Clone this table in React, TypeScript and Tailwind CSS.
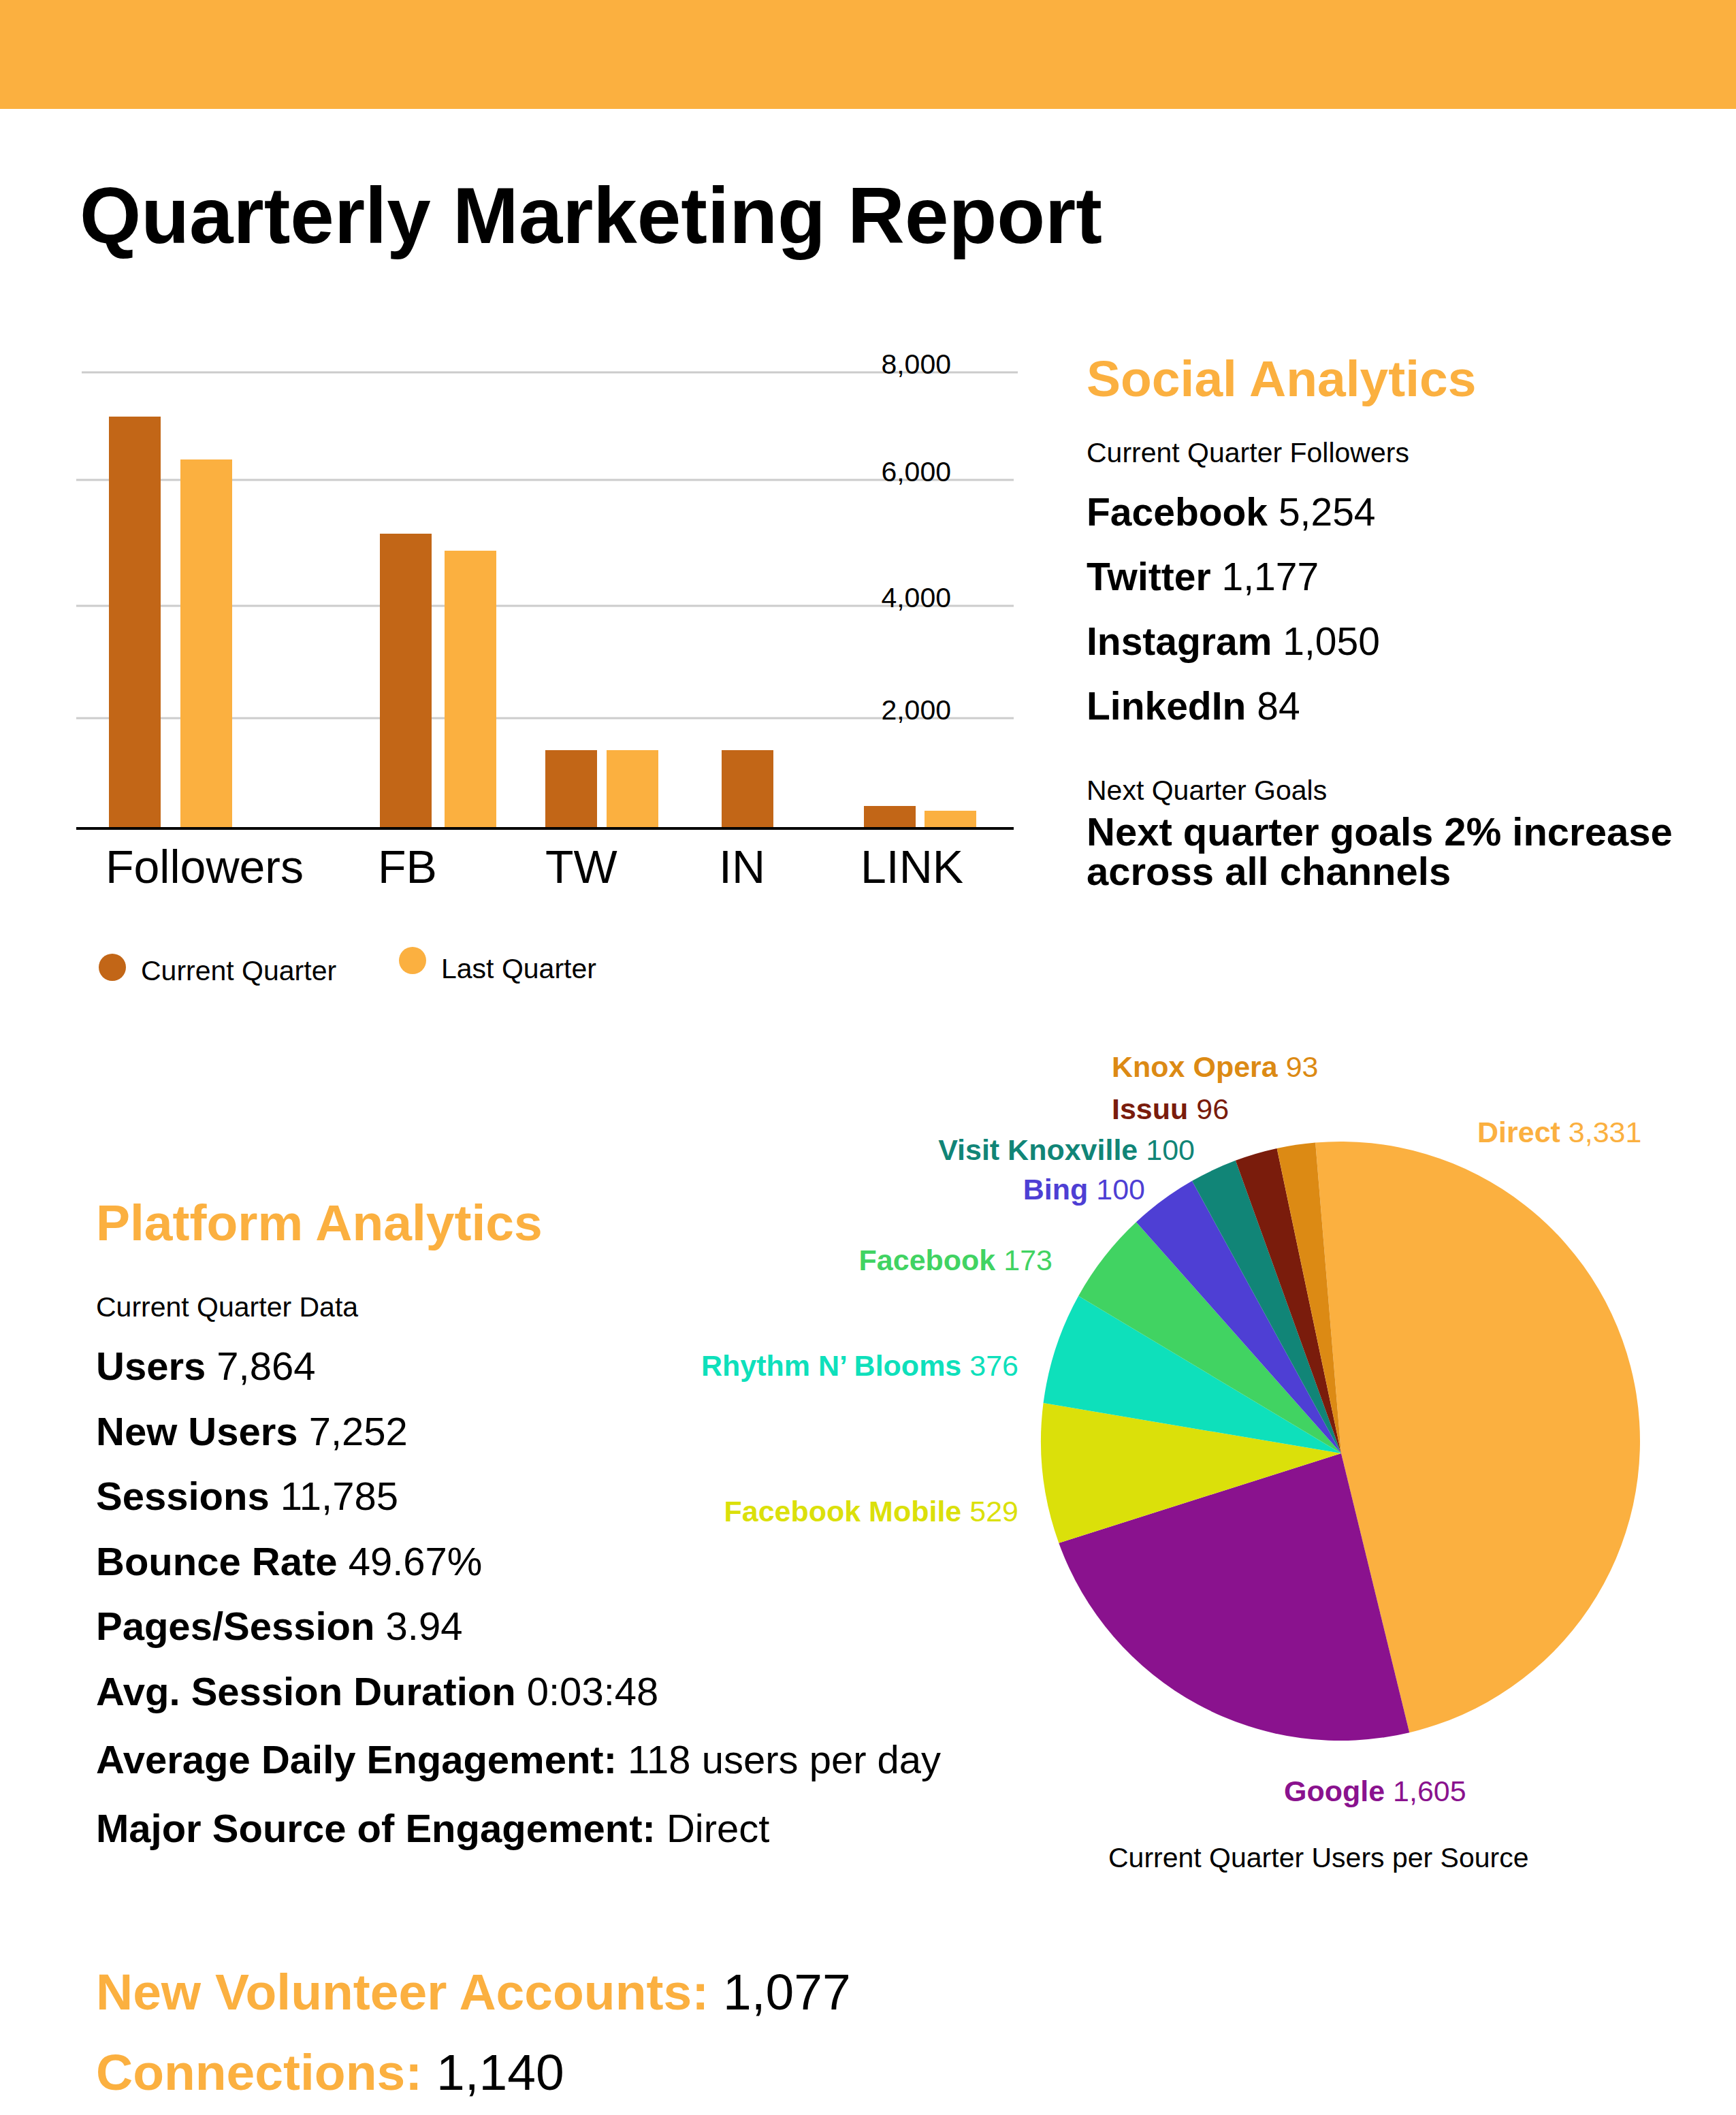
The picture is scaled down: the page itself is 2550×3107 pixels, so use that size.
import React from "react";

const ORANGE = "#fbb040";
const RUST = "#c26617";

const gridLines = [
  { y: 547, label: "8,000", x1: 120, x2: 1495 },
  { y: 705, label: "6,000", x1: 112, x2: 1489 },
  { y: 890, label: "4,000", x1: 112, x2: 1489 },
  { y: 1055, label: "2,000", x1: 112, x2: 1489 },
];

const bars = [
  { x: 160, top: 612, fill: RUST },
  { x: 265, top: 675, fill: ORANGE },
  { x: 558, top: 784, fill: RUST },
  { x: 653, top: 809, fill: ORANGE },
  { x: 801, top: 1102, fill: RUST },
  { x: 891, top: 1102, fill: ORANGE },
  { x: 1060, top: 1102, fill: RUST },
  { x: 1269, top: 1184, fill: RUST },
  { x: 1358, top: 1191, fill: ORANGE },
];

const categories = [
  { label: "Followers", x: 155 },
  { label: "FB", x: 555 },
  { label: "TW", x: 801 },
  { label: "IN", x: 1056 },
  { label: "LINK", x: 1264 },
];

const BASE_Y = 1217;

function BarChart() {
  return (
    <svg width={1596} height={1105} viewBox="0 375 1596 1105" className="block shrink-0">
      {gridLines.map((line) => (
        <g key={line.label}>
          <line x1={line.x1} x2={line.x2} y1={line.y} y2={line.y} stroke="#cccccc" strokeWidth={3} />
          <text x={1397} y={line.y + 2} textAnchor="end" fontSize={41} fill="#000">
            {line.label}
          </text>
        </g>
      ))}
      {bars.map((bar, i) => (
        <rect key={i} x={bar.x} y={bar.top} width={76} height={BASE_Y - bar.top} fill={bar.fill} />
      ))}
      <line x1={112} x2={1489} y1={BASE_Y} y2={BASE_Y} stroke="#000" strokeWidth={4} />
      {categories.map((cat) => (
        <text key={cat.label} x={cat.x} y={1297} fontSize={68} fill="#000">
          {cat.label}
        </text>
      ))}
      <circle cx={165} cy={1421} r={20} fill={RUST} />
      <text x={207} y={1440} fontSize={41} fill="#000">
        Current Quarter
      </text>
      <circle cx={606} cy={1411} r={20} fill={ORANGE} />
      <text x={648} y={1437} fontSize={41} fill="#000">
        Last Quarter
      </text>
    </svg>
  );
}

// slice edges in degrees, clockwise from 12 o'clock
const slices = [
  { name: "Direct", from: -4.8, to: 166.7, color: ORANGE },
  { name: "Google", from: 166.7, to: 250.1, color: "#8a128e" },
  { name: "Facebook Mobile", from: 250.1, to: 277.3, color: "#dbe00a" },
  { name: "Rhythm N’ Blooms", from: 277.3, to: 299, color: "#0ee0bb" },
  { name: "Facebook", from: 299, to: 317, color: "#41d362" },
  { name: "Bing", from: 317, to: 330.3, color: "#4e3fd4" },
  { name: "Visit Knoxville", from: 330.3, to: 339.5, color: "#118577" },
  { name: "Issuu", from: 339.5, to: 347.75, color: "#7a1c0c" },
  { name: "Knox Opera", from: 347.75, to: 355.2, color: "#dc8a14" },
];

const pieLabels = [
  { name: "Knox Opera", value: "93", x: 1633, y: 1582, anchor: "start", color: "#dc8a14" },
  { name: "Issuu", value: "96", x: 1633, y: 1644, anchor: "start", color: "#7a1c0c" },
  { name: "Direct", value: "3,331", x: 2170, y: 1678, anchor: "start", color: ORANGE },
  { name: "Visit Knoxville", value: "100", x: 1755, y: 1704, anchor: "end", color: "#118577" },
  { name: "Bing", value: "100", x: 1682, y: 1762, anchor: "end", color: "#4e3fd4" },
  { name: "Facebook", value: "173", x: 1546, y: 1866, anchor: "end", color: "#41d362" },
  { name: "Rhythm N’ Blooms", value: "376", x: 1496, y: 2021, anchor: "end", color: "#0ee0bb" },
  { name: "Facebook Mobile", value: "529", x: 1496, y: 2235, anchor: "end", color: "#dbe00a" },
  { name: "Google", value: "1,605", x: 1886, y: 2646, anchor: "start", color: "#8a128e" },
];

const CX = 1969;
const CY = 2117;
const R = 440;
const APEX = { x: 1970, y: 2135 };

function pointAt(deg: number) {
  const a = (deg * Math.PI) / 180;
  return { x: CX + R * Math.sin(a), y: CY - R * Math.cos(a) };
}

function PieChart() {
  return (
    <svg width={1550} height={1300} viewBox="1000 1480 1550 1300" className="block shrink-0">
      {slices.map((s) => {
        const p0 = pointAt(s.from);
        const p1 = pointAt(s.to);
        const large = s.to - s.from > 180 ? 1 : 0;
        return (
          <path
            key={s.name}
            d={`M ${APEX.x} ${APEX.y} L ${p0.x} ${p0.y} A ${R} ${R} 0 ${large} 1 ${p1.x} ${p1.y} Z`}
            fill={s.color}
          />
        );
      })}
      {pieLabels.map((l) => (
        <text
          key={l.name}
          x={l.x}
          y={l.y}
          textAnchor={l.anchor as "start" | "end"}
          fontSize={43}
          fill={l.color}
        >
          <tspan fontWeight={700}>{l.name}</tspan> {l.value}
        </text>
      ))}
      <text x={1628} y={2743} fontSize={41} fill="#000">
        Current Quarter Users per Source
      </text>
    </svg>
  );
}

const socialRows = [
  { label: "Facebook", value: "5,254" },
  { label: "Twitter", value: "1,177" },
  { label: "Instagram", value: "1,050" },
  { label: "LinkedIn", value: "84" },
];

const platformRows = [
  { label: "Users", value: "7,864" },
  { label: "New Users", value: "7,252" },
  { label: "Sessions", value: "11,785" },
  { label: "Bounce Rate", value: "49.67%" },
  { label: "Pages/Session", value: "3.94" },
  { label: "Avg. Session Duration", value: "0:03:48" },
];

export default function App() {
  return (
    <div className="min-h-[3107px] w-[2550px] overflow-hidden bg-white font-['Liberation_Sans',Arial,sans-serif] text-black">
      <div className="h-[160px] bg-[#fbb040]" />

      <h1 className="mt-[99px] pl-[117px] text-[116px] font-bold leading-[116px]">
        Quarterly Marketing Report
      </h1>

      <section className="flex">
        <BarChart />
        <div className="flex-1">
          <h2 className="mt-[141px] text-[75px] font-bold leading-[80px] text-[#fbb040]">
            Social Analytics
          </h2>
          <p className="mt-[44px] text-[41px] leading-[50px]">Current Quarter Followers</p>
          <div className="mt-[15px]">
            {socialRows.map((row) => (
              <p key={row.label} className="text-[57px] leading-[95px]">
                <span className="font-bold">{row.label}</span> {row.value}
              </p>
            ))}
          </div>
          <p className="mt-[51px] text-[41px] leading-[50px]">Next Quarter Goals</p>
          <p className="mt-[7px] text-[58px] font-bold leading-[58px]">
            Next quarter goals 2% increase
            <br />
            across all channels
          </p>
        </div>
      </section>

      <section className="flex">
        <div className="w-[1000px] shrink-0 whitespace-nowrap pl-[141px]">
          <h2 className="mt-[276px] text-[75px] font-bold leading-[80px] text-[#fbb040]">
            Platform Analytics
          </h2>
          <p className="mt-[59px] text-[41px] leading-[50px]">Current Quarter Data</p>
          <div className="mt-[14px]">
            {platformRows.map((row) => (
              <p key={row.label} className="text-[58px] leading-[95.5px]">
                <span className="font-bold">{row.label}</span> {row.value}
              </p>
            ))}
          </div>
          <div className="mt-[2px]">
            <p className="text-[58px] leading-[101px]">
              <span className="font-bold">Average Daily Engagement:</span> 118 users per day
            </p>
            <p className="text-[58px] leading-[101px]">
              <span className="font-bold">Major Source of Engagement:</span> Direct
            </p>
          </div>
        </div>
        <PieChart />
      </section>

      <section className="mt-[87px] pl-[141px] text-[75px] leading-[118px]">
        <p>
          <span className="font-bold text-[#fbb040]">New Volunteer Accounts:</span> 1,077
        </p>
        <p>
          <span className="font-bold text-[#fbb040]">Connections:</span> 1,140
        </p>
      </section>
    </div>
  );
}
